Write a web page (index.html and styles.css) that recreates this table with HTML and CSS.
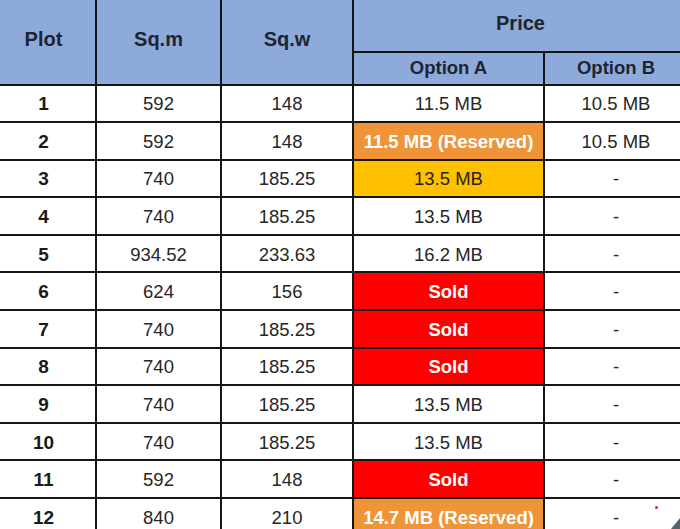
FILE: index.html
```html
<!DOCTYPE html>
<html>
<head>
<meta charset="utf-8">
<link rel="stylesheet" href="styles.css">
</head>
<body>
<div class="frame">
<table class="plots">
  <colgroup>
    <col class="c-plot"><col class="c-sqm"><col class="c-sqw"><col class="c-a"><col class="c-b">
  </colgroup>
  <thead>
    <tr class="h1">
      <th rowspan="2" class="big">Plot</th>
      <th rowspan="2" class="big">Sq.m</th>
      <th rowspan="2" class="big">Sq.w</th>
      <th colspan="2" class="big">Price</th>
    </tr>
    <tr class="h2">
      <th>Option A</th>
      <th>Option B</th>
    </tr>
  </thead>
  <tbody>
    <tr><td class="n">1</td><td>592</td><td>148</td><td>11.5 MB</td><td>10.5 MB</td></tr>
    <tr><td class="n">2</td><td>592</td><td>148</td><td class="reserved">11.5 MB (Reserved)</td><td>10.5 MB</td></tr>
    <tr><td class="n">3</td><td>740</td><td>185.25</td><td class="pending">13.5 MB</td><td>-</td></tr>
    <tr><td class="n">4</td><td>740</td><td>185.25</td><td>13.5 MB</td><td>-</td></tr>
    <tr><td class="n">5</td><td>934.52</td><td>233.63</td><td>16.2 MB</td><td>-</td></tr>
    <tr><td class="n">6</td><td>624</td><td>156</td><td class="sold">Sold</td><td>-</td></tr>
    <tr><td class="n">7</td><td>740</td><td>185.25</td><td class="sold">Sold</td><td>-</td></tr>
    <tr><td class="n">8</td><td>740</td><td>185.25</td><td class="sold">Sold</td><td>-</td></tr>
    <tr><td class="n">9</td><td>740</td><td>185.25</td><td>13.5 MB</td><td>-</td></tr>
    <tr><td class="n">10</td><td>740</td><td>185.25</td><td>13.5 MB</td><td>-</td></tr>
    <tr><td class="n">11</td><td>592</td><td>148</td><td class="sold">Sold</td><td>-</td></tr>
    <tr><td class="n">12</td><td>840</td><td>210</td><td class="reserved">14.7 MB (Reserved)</td><td>-</td></tr>
  </tbody>
</table>
<span class="dot"></span>
<span class="corner"></span>
</div>
</body>
</html>
```

FILE: styles.css
```css
html, body {
  margin: 0;
  padding: 0;
  background: #ffffff;
  overflow: hidden;
}
.frame {
  position: relative;
  width: 680px;
  height: 529px;
  overflow: hidden;
}
.plots {
  margin-left: -10px;
  margin-top: -6px;
  width: 697px;
  table-layout: fixed;
  border-collapse: collapse;
  font-family: "Liberation Sans", Arial, sans-serif;
  font-size: 18.5px;
  color: #262626;
}
.c-plot { width: 105px; }
.c-sqm { width: 125px; }
.c-sqw { width: 132px; }
.c-a { width: 191px; }
.c-b { width: 144px; }
.plots th,
.plots td {
  border: 2px solid #151515;
  padding: 0;
  text-align: center;
  vertical-align: middle;
  white-space: nowrap;
}
.plots th {
  background: #8eaadb;
  font-weight: bold;
  color: #1e2430;
}
.plots th.big {
  font-size: 20px;
}
.h1 { height: 57px; }
.h2 { height: 32.5px; }
.plots tbody tr { height: 37.6px; }
.plots td { padding-top: 2px; }
.plots td.n {
  font-weight: bold;
  color: #1a1a1a;
  font-size: 19px;
}
.plots td.reserved {
  background: #ef9438;
  color: #ffffff;
  font-weight: bold;
}
.plots td.pending {
  background: #ffc000;
  color: #2a2310;
}
.plots td.sold {
  background: #ff0000;
  color: #ffffff;
  font-weight: bold;
}
.dot {
  position: absolute;
  left: 655px;
  top: 506px;
  width: 3px;
  height: 3px;
  border-radius: 50%;
  background: #d8262e;
}
.corner {
  position: absolute;
  right: 0;
  bottom: 0;
  width: 0;
  height: 0;
  border-left: 9px solid transparent;
  border-bottom: 11px solid #5a6268;
}
```
